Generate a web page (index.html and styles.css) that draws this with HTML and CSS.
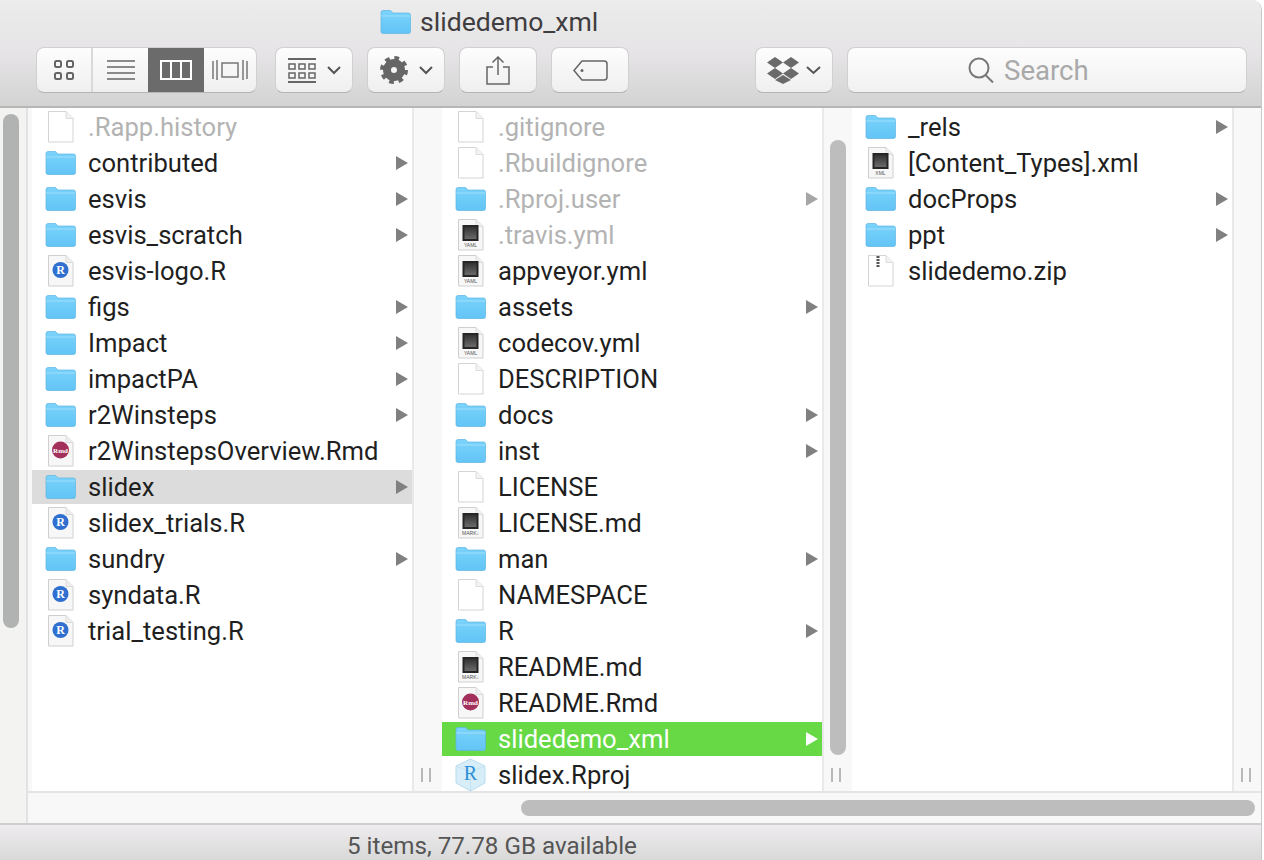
FILE: index.html
```html
<!DOCTYPE html>
<html>
<head>
  <title>slidedemo_xml</title>
  <link rel="stylesheet" href="styles.css">
</head>
<body>
  <svg class="defs" width="0" height="0">
    <defs>
      <linearGradient id="folder-fill" x1="0" y1="0" x2="0" y2="1">
        <stop offset="0" stop-color="#7bd3fb"/>
        <stop offset="1" stop-color="#62c4f6"/>
      </linearGradient>
      <linearGradient id="screen-fill" x1="0" y1="0" x2="0" y2="1">
        <stop offset="0" stop-color="#333"/>
        <stop offset="1" stop-color="#6a6a6a"/>
      </linearGradient>
      <symbol id="folder" viewBox="0 0 32 34">
        <path d="M1 7.500Q1 5.500 3 5.500H10.500L13 8H28.500Q30.500 8 30.500 10V26.500Q30.500 28.500 28.500 28.500H3Q1 28.500 1 26.500Z" fill="url(#folder-fill)" stroke="#5db5e2" stroke-width=".7"/>
        <path d="M1.200 11H30.300" stroke="#9ee0fc" stroke-width="1"/>
      </symbol>
      <symbol id="page" viewBox="0 0 32 34">
        <path d="M3.500 1.500H21L28 8.500V32H3.500Z" fill="#fff" stroke="#d4d4d4"/>
        <path d="M21 1.500V8.500H28" fill="#f2f2f2" stroke="#dcdcdc"/>
      </symbol>
      <symbol id="page-shaded" viewBox="0 0 32 34">
        <path d="M3.500 1.500H21L28 8.500V32H3.500Z" fill="#f7f7f7" stroke="#cfcfcf"/>
        <path d="M21 1.500V8.500H28" fill="#eee" stroke="#dcdcdc"/>
      </symbol>
      <symbol id="r-badge" viewBox="0 0 32 34">
        <use href="#page-shaded"/>
        <circle cx="15.500" cy="16" r="8" fill="#2f6fd0"/>
      </symbol>
      <symbol id="rmd-badge" viewBox="0 0 32 34">
        <use href="#page-shaded"/>
        <circle cx="15.500" cy="16" r="8.500" fill="#a3305a"/>
      </symbol>
      <symbol id="text-doc" viewBox="0 0 32 34">
        <use href="#page-shaded"/>
        <rect x="7.500" y="7" width="16" height="16" fill="#262626"/>
        <rect x="9.500" y="9" width="12" height="12" fill="url(#screen-fill)"/>
      </symbol>
      <symbol id="zip" viewBox="0 0 32 34">
        <use href="#page"/>
        <path d="M13 2V14" stroke="#555" stroke-width="3" stroke-dasharray="2 1"/>
      </symbol>
      <symbol id="rproj" viewBox="0 0 32 34">
        <path d="M15.500 1L30 8V25L15.500 33L1 25V8Z" fill="#d7edf8" stroke="#b9ddef"/>
        <path d="M1 8L15.500 14L30 8M15.500 14V33" fill="none" stroke="#c4e3f2"/>
      </symbol>
    </defs>
  </svg>

  <div class="window">
    <header class="toolbar-area">
      <div class="title-row">
        <svg width="32" height="34"><use href="#folder"/></svg>
        <span class="title">slidedemo_xml</span>
      </div>
      <div class="tools">
        <div class="view-switch">
          <div class="view-btn grid-btn">
            <svg width="22" height="22" fill="none" stroke="#666" stroke-width="2"><rect x="2" y="2" width="6" height="6" rx="1.500"/><rect x="14" y="2" width="6" height="6" rx="1.500"/><rect x="2" y="14" width="6" height="6" rx="1.500"/><rect x="14" y="14" width="6" height="6" rx="1.500"/></svg>
          </div>
          <div class="view-btn list-btn">
            <svg width="28" height="20" stroke="#666" stroke-width="1.500"><path d="M0 1H28M0 7H28M0 13H28M0 19H28"/></svg>
          </div>
          <div class="view-btn view-on">
            <svg width="32" height="20" fill="none" stroke="#fff" stroke-width="2"><rect x="1" y="1" width="30" height="18"/><path d="M11 1V19M21 1V19"/></svg>
          </div>
          <div class="view-btn flow-btn">
            <svg width="36" height="22" fill="none" stroke="#777" stroke-width="1.500"><rect x="10" y="4" width="16" height="14"/><path d="M1 2V20M5 1V21M31 1V21M35 2V20"/></svg>
          </div>
        </div>
        <div class="tool-btn">
          <svg width="28" height="25" fill="none" stroke="#666" stroke-width="1.500"><path d="M0 1H28M0 24H28" stroke-width="2"/><rect x="1" y="6" width="6" height="5"/><rect x="11" y="6" width="6" height="5"/><rect x="21" y="6" width="6" height="5"/><rect x="1" y="15" width="6" height="5"/><rect x="11" y="15" width="6" height="5"/><rect x="21" y="15" width="6" height="5"/></svg>
          <svg class="chevron" width="14" height="9" fill="none" stroke="#555" stroke-width="2"><path d="M1 1L7 7L13 1"/></svg>
        </div>
        <div class="tool-btn">
          <svg width="28" height="28" fill="none" stroke="#666"><circle cx="14" cy="14" r="11.500" stroke-width="5" stroke-dasharray="4.500 4.530"/><circle cx="14" cy="14" r="7" stroke-width="8"/></svg>
          <svg class="chevron" width="14" height="9" fill="none" stroke="#555" stroke-width="2"><path d="M1 1L7 7L13 1"/></svg>
        </div>
        <div class="tool-btn">
          <svg width="24" height="29" fill="none" stroke="#666" stroke-width="1.500"><path d="M7 11H1V28H23V11H17M12 19V1M6.500 6.500L12 1L17.500 6.500"/></svg>
        </div>
        <div class="tool-btn">
          <svg width="35" height="21" fill="none" stroke="#666" stroke-width="1.500"><path d="M9 1H31Q34 1 34 4V17Q34 20 31 20H9L1 10.500Z"/><circle cx="9" cy="10.500" r="1.500" fill="#666" stroke="none"/></svg>
        </div>
        <div class="tool-spacer"></div>
        <div class="tool-btn">
          <svg width="32" height="27" fill="#6a6a6a"><path d="M8 0L16 5.500L8 11L0 5.500Z"/><path d="M24 0L32 5.500L24 11L16 5.500Z"/><path d="M8 11L16 16.500L8 22L0 16.500Z"/><path d="M24 11L32 16.500L24 22L16 16.500Z"/><path d="M16 18L24 23L16 27L8 23Z"/></svg>
          <svg class="chevron-small" width="15" height="9" fill="none" stroke="#555" stroke-width="2"><path d="M1 1L7.500 7L14 1"/></svg>
        </div>
        <div class="search-box">
          <svg width="26" height="26" fill="none" stroke="#777" stroke-width="2"><circle cx="11" cy="11" r="9.500"/><path d="M17.500 18L25 25.500"/></svg>
          <span class="search-text">Search</span>
        </div>
      </div>
    </header>

    <main class="main">
      <div class="side-strip">
        <div class="side-thumb"></div>
      </div>
      <div class="browser">
        <div class="columns">

          <div class="column">
            <ul class="list">
              <li class="row dim"><svg width="32" height="34"><use href="#page"/></svg><span class="name">.Rapp.history</span></li>
              <li class="row"><svg width="32" height="34"><use href="#folder"/></svg><span class="name">contributed</span><span class="arrow"></span></li>
              <li class="row"><svg width="32" height="34"><use href="#folder"/></svg><span class="name">esvis</span><span class="arrow"></span></li>
              <li class="row"><svg width="32" height="34"><use href="#folder"/></svg><span class="name">esvis_scratch</span><span class="arrow"></span></li>
              <li class="row"><svg width="32" height="34"><use href="#r-badge"/><text x="15.500" y="20" class="badge-r">R</text></svg><span class="name">esvis-logo.R</span></li>
              <li class="row"><svg width="32" height="34"><use href="#folder"/></svg><span class="name">figs</span><span class="arrow"></span></li>
              <li class="row"><svg width="32" height="34"><use href="#folder"/></svg><span class="name">Impact</span><span class="arrow"></span></li>
              <li class="row"><svg width="32" height="34"><use href="#folder"/></svg><span class="name">impactPA</span><span class="arrow"></span></li>
              <li class="row"><svg width="32" height="34"><use href="#folder"/></svg><span class="name">r2Winsteps</span><span class="arrow"></span></li>
              <li class="row"><svg width="32" height="34"><use href="#rmd-badge"/><text x="15.500" y="19" class="badge-rmd">Rmd</text></svg><span class="name">r2WinstepsOverview.Rmd</span></li>
              <li class="row row-gray"><svg width="32" height="34"><use href="#folder"/></svg><span class="name">slidex</span><span class="arrow"></span></li>
              <li class="row"><svg width="32" height="34"><use href="#r-badge"/><text x="15.500" y="20" class="badge-r">R</text></svg><span class="name">slidex_trials.R</span></li>
              <li class="row"><svg width="32" height="34"><use href="#folder"/></svg><span class="name">sundry</span><span class="arrow"></span></li>
              <li class="row"><svg width="32" height="34"><use href="#r-badge"/><text x="15.500" y="20" class="badge-r">R</text></svg><span class="name">syndata.R</span></li>
              <li class="row"><svg width="32" height="34"><use href="#r-badge"/><text x="15.500" y="20" class="badge-r">R</text></svg><span class="name">trial_testing.R</span></li>
            </ul>
            <div class="gutter">
              <div class="grip"></div>
            </div>
          </div>

          <div class="column">
            <ul class="list">
              <li class="row dim"><svg width="32" height="34"><use href="#page"/></svg><span class="name">.gitignore</span></li>
              <li class="row dim"><svg width="32" height="34"><use href="#page"/></svg><span class="name">.Rbuildignore</span></li>
              <li class="row dim"><svg width="32" height="34"><use href="#folder"/></svg><span class="name">.Rproj.user</span><span class="arrow"></span></li>
              <li class="row dim"><svg width="32" height="34"><use href="#text-doc"/><text x="15.500" y="29" class="badge-doc">YAML</text></svg><span class="name">.travis.yml</span></li>
              <li class="row"><svg width="32" height="34"><use href="#text-doc"/><text x="15.500" y="29" class="badge-doc">YAML</text></svg><span class="name">appveyor.yml</span></li>
              <li class="row"><svg width="32" height="34"><use href="#folder"/></svg><span class="name">assets</span><span class="arrow"></span></li>
              <li class="row"><svg width="32" height="34"><use href="#text-doc"/><text x="15.500" y="29" class="badge-doc">YAML</text></svg><span class="name">codecov.yml</span></li>
              <li class="row"><svg width="32" height="34"><use href="#page"/></svg><span class="name">DESCRIPTION</span></li>
              <li class="row"><svg width="32" height="34"><use href="#folder"/></svg><span class="name">docs</span><span class="arrow"></span></li>
              <li class="row"><svg width="32" height="34"><use href="#folder"/></svg><span class="name">inst</span><span class="arrow"></span></li>
              <li class="row"><svg width="32" height="34"><use href="#page"/></svg><span class="name">LICENSE</span></li>
              <li class="row"><svg width="32" height="34"><use href="#text-doc"/><text x="15.500" y="29" class="badge-doc">MARK↓</text></svg><span class="name">LICENSE.md</span></li>
              <li class="row"><svg width="32" height="34"><use href="#folder"/></svg><span class="name">man</span><span class="arrow"></span></li>
              <li class="row"><svg width="32" height="34"><use href="#page"/></svg><span class="name">NAMESPACE</span></li>
              <li class="row"><svg width="32" height="34"><use href="#folder"/></svg><span class="name">R</span><span class="arrow"></span></li>
              <li class="row"><svg width="32" height="34"><use href="#text-doc"/><text x="15.500" y="29" class="badge-doc">MARK↓</text></svg><span class="name">README.md</span></li>
              <li class="row"><svg width="32" height="34"><use href="#rmd-badge"/><text x="15.500" y="19" class="badge-rmd">Rmd</text></svg><span class="name">README.Rmd</span></li>
              <li class="row row-green"><svg width="32" height="34"><use href="#folder"/></svg><span class="name">slidedemo_xml</span><span class="arrow"></span></li>
              <li class="row"><svg width="32" height="34"><use href="#rproj"/><text x="15.500" y="22" class="badge-proj">R</text></svg><span class="name">slidex.Rproj</span></li>
            </ul>
            <div class="gutter">
              <div class="list-thumb"></div>
              <div class="grip"></div>
            </div>
          </div>

          <div class="column">
            <ul class="list">
              <li class="row"><svg width="32" height="34"><use href="#folder"/></svg><span class="name">_rels</span><span class="arrow"></span></li>
              <li class="row"><svg width="32" height="34"><use href="#text-doc"/><text x="15.500" y="29" class="badge-doc">XML</text></svg><span class="name">[Content_Types].xml</span></li>
              <li class="row"><svg width="32" height="34"><use href="#folder"/></svg><span class="name">docProps</span><span class="arrow"></span></li>
              <li class="row"><svg width="32" height="34"><use href="#folder"/></svg><span class="name">ppt</span><span class="arrow"></span></li>
              <li class="row"><svg width="32" height="34"><use href="#zip"/></svg><span class="name">slidedemo.zip</span></li>
            </ul>
            <div class="gutter">
              <div class="grip"></div>
            </div>
          </div>

        </div>
        <div class="hscroll">
          <div class="hscroll-thumb"></div>
        </div>
      </div>
    </main>

    <footer class="status">5 items, 77.78 GB available</footer>
  </div>
</body>
</html>
```

FILE: styles.css
```css
*
{
  box-sizing:border-box;
}

body
{
  margin:0;
  height:860px;
  overflow:hidden;
  background-color:#fff;
  font-family:Roboto, "Liberation Sans", sans-serif;
}

.defs
{
  display:block;
  height:0;
}

.window
{
  width:1262px;
  height:860px;
  border-top-right-radius:10px;
  overflow:hidden;
  border-right:1px solid #c9c9c9;
  display:flex;
  flex-direction:column;
}

/* top bar */

.toolbar-area
{
  height:108px;
  flex-shrink:0;
  background:linear-gradient(#ececec, #e6e4e6 50%, #d3d3d3);
  border-bottom:2px solid #b6b6b6;
}

.title-row
{
  height:47px;
  padding:1px 0 5px 380px;
  display:flex;
  align-items:center;
  gap:8px;
}

.title
{
  font-size:26.6px;
  color:#3f3d3f;
}

.tools
{
  padding:0 14px 0 36px;
  display:flex;
  align-items:flex-start;
  gap:14px;
}

.view-switch
{
  width:221px;
  height:46px;
  margin-right:4px;
  display:flex;
  border-radius:8px;
  overflow:hidden;
  border:1px solid #d0d0d0;
  border-bottom-color:#b4b4b4;
  background:linear-gradient(#fdfdfd, #efefef);
}

.view-btn
{
  display:flex;
  justify-content:center;
  align-items:center;
}

.grid-btn
{
  width:56px;
  border-right:2px solid #d9d9d9;
}

.list-btn
{
  width:55px;
}

.view-on
{
  width:56px;
  background-color:#6b6b6b;
}

.flow-btn
{
  width:52px;
}

.tool-btn
{
  width:78px;
  height:46px;
  display:flex;
  justify-content:center;
  align-items:center;
  gap:11px;
  border-radius:8px;
  border:1px solid #d0d0d0;
  border-bottom-color:#b4b4b4;
  background:linear-gradient(#fdfdfd, #efefef);
}

.chevron-small
{
  margin-left:-4px;
}

.tool-spacer
{
  flex:1;
}

.search-box
{
  width:400px;
  height:46px;
  padding-left:120px;
  display:flex;
  align-items:center;
  gap:10px;
  border-radius:8px;
  border:1px solid #d0d0d0;
  border-bottom-color:#b4b4b4;
  background:linear-gradient(#fdfdfd, #f1f1f1);
}

.search-text
{
  font-size:27.6px;
  color:#a9a9a9;
}

/* columns */

.main
{
  flex:1;
  min-height:0;
  display:flex;
}

.side-strip
{
  width:28px;
  flex-shrink:0;
  padding:6px 0 0 3px;
  background-color:#f3f3f1;
  border-right:2px solid #e2e2e2;
}

.side-thumb
{
  width:16px;
  height:514px;
  border-radius:8px;
  background-color:#b0b3b2;
}

.browser
{
  flex:1;
  min-width:0;
  display:flex;
  flex-direction:column;
}

.columns
{
  height:685px;
  padding-left:4px;
  background-color:#f8f8f8;
  display:flex;
  border-bottom:2px solid #e4e4e4;
}

.column
{
  width:410px;
  flex-shrink:0;
  display:flex;
}

.list
{
  width:380px;
  flex-shrink:0;
  margin:0;
  padding:2px 0 0 0;
  list-style:none;
  background-color:#fff;
  display:flex;
  flex-direction:column;
  gap:2px;
}

.row
{
  height:34px;
  flex-shrink:0;
  padding:0 4px 0 13px;
  display:flex;
  align-items:center;
  font-size:25.6px;
  color:#1f1f1f;
}

.row svg
{
  flex-shrink:0;
}

.name
{
  margin-left:11px;
  flex:1;
  white-space:nowrap;
}

.dim .name
{
  color:#b3b3b3;
}

.arrow
{
  width:0;
  height:0;
  border-left:12px solid #808080;
  border-top:7px solid transparent;
  border-bottom:7px solid transparent;
}

.dim .arrow
{
  opacity:0.7;
}

.row-gray
{
  background-color:#dcdcdc;
}

.row-green
{
  background-color:#66d945;
}

.row-green .name
{
  color:#fff;
}

.row-green .arrow
{
  border-left-color:#fff;
}

.badge-r
{
  font-family:"Liberation Serif", serif;
  font-size:12px;
  font-weight:bold;
  fill:#fff;
  text-anchor:middle;
}

.badge-rmd
{
  font-family:"Liberation Serif", serif;
  font-size:7px;
  font-weight:bold;
  fill:#fff;
  text-anchor:middle;
}

.badge-doc
{
  font-family:"Liberation Sans", sans-serif;
  font-size:5px;
  fill:#555;
  text-anchor:middle;
}

.badge-proj
{
  font-family:"Liberation Serif", serif;
  font-size:20px;
  fill:#2b8fd6;
  text-anchor:middle;
}

.gutter
{
  width:30px;
  flex-shrink:0;
  padding-top:32px;
  border-left:2px solid #e9e9e9;
  display:flex;
  flex-direction:column;
  align-items:center;
}

.list-thumb
{
  width:16px;
  height:615px;
  border-radius:8px;
  background-color:#bdbdbd;
}

.grip
{
  width:10px;
  height:14px;
  margin-top:auto;
  margin-bottom:9px;
  margin-right:4px;
  border-left:2px solid #b8b8b8;
  border-right:2px solid #b8b8b8;
}

.hscroll
{
  height:30px;
  padding:7px 6px 0 493px;
  background-color:#f8f8f8;
}

.hscroll-thumb
{
  height:16px;
  border-radius:8px;
  background-color:#bdbdbd;
}

/* bottom bar */

.status
{
  height:37px;
  flex-shrink:0;
  padding:6px 0 0 347px;
  border-top:2px solid #cfcdcf;
  background:linear-gradient(#eeecee, #d9d9d9);
  font-size:24.2px;
  line-height:30px;
  color:#555;
}
```
